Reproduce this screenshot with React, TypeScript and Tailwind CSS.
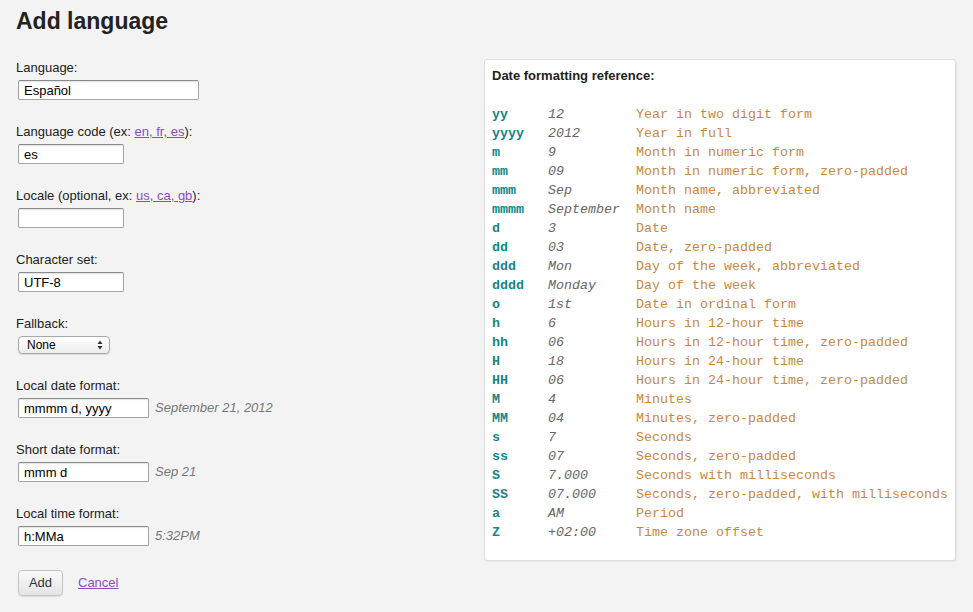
import React from 'react'

const sans = { fontFamily: '"Liberation Sans", Arial, sans-serif' }

interface FormatRow {
  code: string
  example: string
  desc: string
}

const rows: FormatRow[] = [
  { code: 'yy', example: '12', desc: 'Year in two digit form' },
  { code: 'yyyy', example: '2012', desc: 'Year in full' },
  { code: 'm', example: '9', desc: 'Month in numeric form' },
  { code: 'mm', example: '09', desc: 'Month in numeric form, zero-padded' },
  { code: 'mmm', example: 'Sep', desc: 'Month name, abbreviated' },
  { code: 'mmmm', example: 'September', desc: 'Month name' },
  { code: 'd', example: '3', desc: 'Date' },
  { code: 'dd', example: '03', desc: 'Date, zero-padded' },
  { code: 'ddd', example: 'Mon', desc: 'Day of the week, abbreviated' },
  { code: 'dddd', example: 'Monday', desc: 'Day of the week' },
  { code: 'o', example: '1st', desc: 'Date in ordinal form' },
  { code: 'h', example: '6', desc: 'Hours in 12-hour time' },
  { code: 'hh', example: '06', desc: 'Hours in 12-hour time, zero-padded' },
  { code: 'H', example: '18', desc: 'Hours in 24-hour time' },
  { code: 'HH', example: '06', desc: 'Hours in 24-hour time, zero-padded' },
  { code: 'M', example: '4', desc: 'Minutes' },
  { code: 'MM', example: '04', desc: 'Minutes, zero-padded' },
  { code: 's', example: '7', desc: 'Seconds' },
  { code: 'ss', example: '07', desc: 'Seconds, zero-padded' },
  { code: 'S', example: '7.000', desc: 'Seconds with milliseconds' },
  { code: 'SS', example: '07.000', desc: 'Seconds, zero-padded, with milliseconds' },
  { code: 'a', example: 'AM', desc: 'Period' },
  { code: 'Z', example: '+02:00', desc: 'Time zone offset' }
]

const inputClass =
  'mt-[4px] block h-[20px] rounded-[2px] border border-[#a3a3a3] border-t-[#8c8c8c] bg-white px-[5px] text-[13px] text-black shadow-[inset_0_1px_1px_rgba(0,0,0,0.12)] outline-none'

const Link: React.FC<{ children: React.ReactNode }> = ({ children }) => (
  <a href="#" className="text-[#8a4cc4] underline">
    {children}
  </a>
)

const Field: React.FC<{
  label: React.ReactNode
  value: string
  width: string
  example?: string
}> = ({ label, value, width, example }) => (
  <div className="mb-[24px]">
    <label className="block h-[16px] leading-[16px] text-[#222]">{label}</label>
    <div className="flex items-center">
      <input className={`${inputClass} ml-[2px] ${width}`} defaultValue={value} style={sans} />
      {example && (
        <span className="ml-[6px] mt-[4px] italic text-[#777]">{example}</span>
      )}
    </div>
  </div>
)

export default function App() {
  return (
    <div className="min-h-[612px] bg-[#f3f3f3] text-[13px] text-[#222]" style={sans}>
      <h1 className="ml-[16px] pt-[7px] text-[23px] font-bold leading-[28px] text-[#222]">
        Add language
      </h1>

      <div className="mt-[24px] flex">
        <form className="w-[484px] shrink-0 pl-[16px] pt-[1px]">
          <Field label="Language:" value="Español" width="w-[181px]" />
          <Field
            label={
              <>
                Language code (ex: <Link>en, fr, es</Link>):
              </>
            }
            value="es"
            width="w-[106px]"
          />
          <Field
            label={
              <>
                Locale (optional, ex: <Link>us, ca, gb</Link>):
              </>
            }
            value=""
            width="w-[106px]"
          />
          <Field label="Character set:" value="UTF-8" width="w-[106px]" />

          <div className="mb-[24px]">
            <label className="block h-[16px] leading-[16px]">Fallback:</label>
            <div className="relative ml-[2px] mt-[4px] w-[92px]">
              <select
                className="block h-[18px] w-[92px] appearance-none rounded-[4px] border border-[#a8a8a8] bg-gradient-to-b from-white to-[#ececec] pl-[8px] text-[12px] leading-[16px] text-black shadow-[0_1px_1px_rgba(0,0,0,0.1)] outline-none"
                style={sans}
              >
                <option>None</option>
              </select>
              <svg
                className="pointer-events-none absolute right-[7px] top-[4px]"
                width="6"
                height="10"
                viewBox="0 0 6 10"
              >
                <path d="M3 0.5 L5.5 4 H0.5 Z" fill="#333" />
                <path d="M3 9.5 L5.5 6 H0.5 Z" fill="#333" />
              </svg>
            </div>
          </div>

          <Field
            label="Local date format:"
            value="mmmm d, yyyy"
            width="w-[131px]"
            example="September 21, 2012"
          />
          <Field
            label="Short date format:"
            value="mmm d"
            width="w-[131px]"
            example="Sep 21"
          />
          <Field
            label="Local time format:"
            value="h:MMa"
            width="w-[131px]"
            example="5:32PM"
          />

          <div className="ml-[2px] mt-[1px] flex items-center gap-[15px]">
            <button
              type="button"
              className="h-[26px] w-[45px] rounded-[4px] border border-[#c4c4c4] bg-gradient-to-b from-[#fafafa] to-[#e4e4e4] text-[13px] text-[#333] shadow-[0_1px_1px_rgba(0,0,0,0.08)]"
              style={sans}
            >
              Add
            </button>
            <Link>Cancel</Link>
          </div>
        </form>

        <div className="h-[502px] w-[472px] shrink-0 rounded-[3px] border border-[#dedede] bg-white px-[7px] pt-[6px] shadow-[1px_1px_1px_rgba(0,0,0,0.06)]">
          <div className="h-[19px] font-bold leading-[19px] text-[#222]">
            Date formatting reference:
          </div>
          <div
            className="mt-[20px] text-[13.33px] leading-[19px]"
            style={{ fontFamily: '"Liberation Mono", "Courier New", monospace' }}
          >
            {rows.map(row => (
              <div key={row.code} className="flex whitespace-pre">
                <span className="w-[56px] shrink-0 font-bold text-[#12878c]">{row.code}</span>
                <span className="w-[88px] shrink-0 italic text-[#666]">{row.example}</span>
                <span className="text-[#c8883c]">{row.desc}</span>
              </div>
            ))}
          </div>
        </div>
      </div>
    </div>
  )
}
